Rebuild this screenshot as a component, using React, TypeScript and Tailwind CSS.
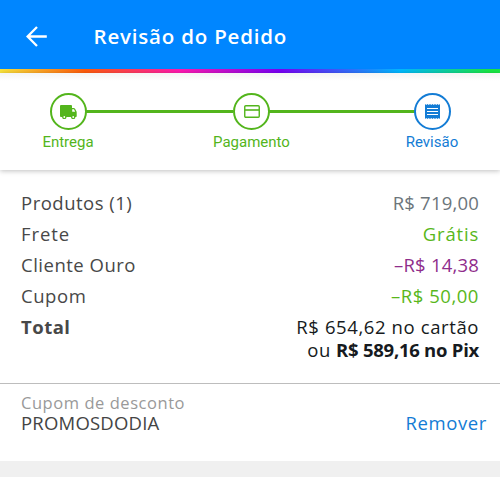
import clsx from "clsx";
import { ReactNode } from "react";

type StepType = {
  label: string;
  active: boolean;
  className?: string;
  icon: ReactNode;
};

type SummaryRowType = {
  label: string;
  labelClass: string;
  value: string;
  valueClass: string;
};

const TruckIcon = () => (
  <svg width="17" height="14" viewBox="0 0 17 14" fill="currentColor">
    <path d="M1 0h10a1 1 0 0 1 1 1v2h1.6c.7 0 1.2.3 1.6.9l1.2 2.4c.2.4.3.8.3 1.2V11c0 .6-.4 1-1 1h-.3a2.2 2.2 0 0 1-4.4 0H6.5a2.2 2.2 0 0 1-4.4 0H1a1 1 0 0 1-1-1V1a1 1 0 0 1 1-1z" />
    <path d="M12.2 4.2h1.2c.3 0 .6.2.7.4l1.1 2.2h-3z" fill="#fff" />
    <circle cx="4.3" cy="12" r="0.9" fill="#fff" />
    <circle cx="13.2" cy="12" r="0.9" fill="#fff" />
  </svg>
);

const CardIcon = () => (
  <svg width="16" height="13" viewBox="0 0 16 13" fill="none" stroke="currentColor">
    <rect x="0.75" y="0.75" width="14.5" height="11.5" rx="1" strokeWidth="1.4" />
    <path d="M1 5h14" strokeWidth="1.6" />
  </svg>
);

const ReceiptIcon = () => (
  <svg width="15" height="15" viewBox="0 0 15 15" fill="currentColor">
    <path d="M0 0l1.25 1L2.5 0l1.25 1L5 0l1.25 1L7.5 0l1.25 1L10 0l1.25 1L12.5 0l1.25 1L15 0v15l-1.25-1-1.25 1-1.25-1-1.25 1-1.25-1-1.25 1-1.25-1L5 15l-1.25-1-1.25 1-1.25-1L0 15z" />
    <path d="M2 4.5h11M2 7.5h11M2 10.5h11" stroke="#fff" strokeWidth="1" />
  </svg>
);

const steps: StepType[] = [
  { label: "Entrega", active: false, icon: <TruckIcon /> },
  { label: "Pagamento", active: false, className: "pl-[3px]", icon: <CardIcon /> },
  { label: "Revisão", active: true, icon: <ReceiptIcon /> },
];

const rows: SummaryRowType[] = [
  {
    label: "Produtos (1)",
    labelClass: "tracking-[0.5px]",
    value: "R$ 719,00",
    valueClass: "text-[#6c757b] tracking-[0.2px]",
  },
  {
    label: "Frete",
    labelClass: "tracking-[0.9px]",
    value: "Grátis",
    valueClass: "text-[#58b71b] tracking-[0.8px]",
  },
  {
    label: "Cliente Ouro",
    labelClass: "tracking-[0.5px]",
    value: "–R$ 14,38",
    valueClass: "text-[#8f2d8b] tracking-[0.2px]",
  },
  {
    label: "Cupom",
    labelClass: "tracking-[0.55px]",
    value: "–R$ 50,00",
    valueClass: "text-[#58b71b] tracking-[0.55px]",
  },
];

const Header = () => (
  <header>
    <div className="flex h-[69px] items-center bg-[#0086ff] pt-[4px] pl-[26px] text-white">
      <svg width="21" height="21" viewBox="0 0 21 21" fill="none" stroke="currentColor" strokeWidth="2.3">
        <path d="M20.8 10.5H1.8M11 1L1.6 10.5L11 20" />
      </svg>
      <h1 className="ml-[46.5px] text-[20.5px] font-semibold tracking-[0.8px]">
        Revisão do Pedido
      </h1>
    </div>
    <div className="h-1 bg-[linear-gradient(90deg,#f9e33a_0%,#ff5b0a_17%,#ff19b0_36%,#7800f5_56%,#00b8ff_80%,#19e643_98%)]" />
  </header>
);

const Stepper = () => (
  <nav className="h-[97px] bg-linear-to-b from-[#f4f4f4] to-white to-[8px] px-[13px] pt-5 font-[Roboto,sans-serif] shadow-[0_1px_5px_rgba(0,0,0,0.25)]">
    <ol className="flex justify-between">
      {steps.map((step, index) => (
        <li
          key={step.label}
          className={clsx(
            "relative flex w-[110px] flex-col items-center",
            step.active ? "text-[#137cd5]" : "text-[#53b51c]",
            step.className
          )}
        >
          {index < steps.length - 1 && (
            <span className="absolute top-[17px] left-[73px] h-[2.5px] w-[147px] bg-[#53b51c]" />
          )}
          <span className="flex size-[37px] items-center justify-center rounded-full border-2 border-current">
            {step.icon}
          </span>
          <span className="mt-[2px] text-[15px] leading-5">{step.label}</span>
        </li>
      ))}
    </ol>
  </nav>
);

const App = () => {
  return (
    <div className="min-h-screen bg-white font-['Open_Sans','Noto_Sans',sans-serif]">
      <Header />
      <Stepper />
      <main>
        <section className="h-[213px] px-[21px] pt-[17px] text-[18.5px] text-[#484848]">
          {rows.map((row) => (
            <div key={row.label} className="flex h-[31.2px] items-center justify-between">
              <span className={row.labelClass}>{row.label}</span>
              <span className={row.valueClass}>{row.value}</span>
            </div>
          ))}
          <div className="flex justify-between pt-[3px] leading-[23px]">
            <span className="font-bold tracking-[0.5px]">Total</span>
            <div className="text-right text-[#161a20]">
              <p className="tracking-[0.6px]">R$ 654,62 no cartão</p>
              <p>
                <span className="tracking-[0.5px]">ou </span>
                <b className="tracking-[-0.25px]">R$ 589,16 no Pix</b>
              </p>
            </div>
          </div>
        </section>
        <section className="flex h-[78px] items-start justify-between border-t border-[#bdbdbd] pt-[9px] pr-[13px] pl-[21px]">
          <div>
            <p className="text-[16.5px] leading-5 tracking-[0.55px] text-[#999]">Cupom de desconto</p>
            <p className="text-[18.5px] leading-5 tracking-[0.2px] text-[#444]">PROMOSDODIA</p>
          </div>
          <button className="mt-5 text-[18.5px] leading-5 tracking-[0.6px] text-[#137cd5]">
            Remover
          </button>
        </section>
        <div className="h-4 bg-[#f0f0f0]" />
      </main>
    </div>
  );
};

export default App;
